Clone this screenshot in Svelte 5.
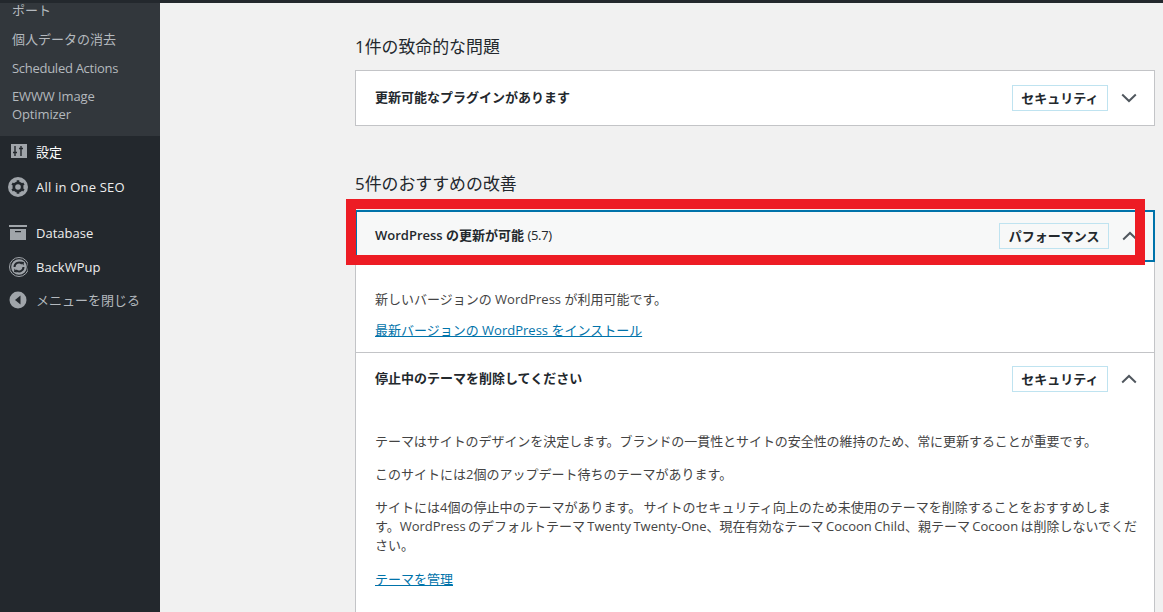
<script>
  const sub = [
    { label: 'ポート', cls: 'first' },
    { label: '個人データの消去', cls: '' },
    { label: 'Scheduled Actions', cls: 'tight' },
    { label: 'EWWW Image Optimizer', cls: 'last' }
  ];
</script>

<div class="page">
  <div class="topbar"></div>
  <div class="body">
    <aside class="side">
      <ul class="submenu">
        {#each sub as s}
          <li class={s.cls}>{s.label}</li>
        {/each}
      </ul>
      <ul class="menu">
        <li class="m settings">
          <svg viewBox="0 0 20 20" width="20" height="20"><path fill="#a0a5aa" d="M3 2h16v14H3z"/><path fill="none" stroke="#23282d" stroke-width="1.400" d="M7 4v10M13 4v10M5 10.500h4M11 6.500h4"/></svg>
          <span class="bright">設定</span>
        </li>
        <li class="m seo">
          <svg viewBox="0 0 20 20" width="20" height="20"><circle cx="10" cy="10" r="10" fill="#a0a5aa"/><circle cx="10" cy="10" r="5.500" fill="#23282d"/><path stroke="#23282d" stroke-width="2.600" d="M10 3.200v13.600M4.100 6.600l11.800 6.800M4.100 13.400l11.800-6.800"/><circle cx="10" cy="10" r="2.800" fill="#a0a5aa"/></svg>
          <span class="wide">All in One SEO</span>
        </li>
        <li class="m db">
          <svg viewBox="0 0 20 20" width="20" height="20"><path fill="#a0a5aa" d="M1 2h18v2H1zM2 6h16v11H2z"/><path fill="#23282d" d="M7 8h6v1.200H7z"/></svg>
          <span>Database</span>
        </li>
        <li class="m bwp">
          <svg viewBox="0 0 20 20" width="20" height="20"><circle cx="11" cy="10" r="9.500" fill="#23282d" stroke="#a0a5aa" stroke-width="1"/><circle cx="11" cy="10" r="7.800" fill="#a0a5aa"/><path fill="none" stroke="#23282d" stroke-width="2" d="M6.500 10a4.500 4.500 0 0 1 7.500-3.300M15.500 10a4.500 4.500 0 0 1-7.500 3.300"/><path fill="#23282d" d="M12.500 4.500l3.500.5-.5 3.500zM9.500 15.500l-3.500-.5.5-3.500z"/></svg>
          <span>BackWPup</span>
        </li>
        <li class="m close">
          <svg viewBox="0 0 20 20" width="20" height="20"><circle cx="10" cy="10" r="8.500" fill="#a0a5aa"/><path fill="#23282d" d="M12.500 5.500v9L7 10z"/></svg>
          <span>メニューを閉じる</span>
        </li>
      </ul>
    </aside>

    <main class="main">
      <div class="col">
        <h2 class="h-critical">1件の致命的な問題</h2>
        <section class="card solo">
          <div class="row">
            <h3>更新可能なプラグインがあります</h3>
            <span class="badge">セキュリティ</span>
            <svg class="chev" viewBox="0 0 16 10" width="16" height="10"><path d="M1.200 1.500 8 8l6.800-6.500" fill="none" stroke="#50575e" stroke-width="2"/></svg>
          </div>
        </section>

        <h2 class="h-rec">5件のおすすめの改善</h2>
        <section class="card">
          <div class="row focus">
            <h3>WordPress の更新が可能 <span class="ver">(5.7)</span></h3>
            <span class="badge">パフォーマンス</span>
            <svg class="chev" viewBox="0 0 16 10" width="16" height="10"><path d="M1.200 8.500 8 2l6.800 6.500" fill="none" stroke="#50575e" stroke-width="2"/></svg>
            <div class="redbox"></div>
          </div>
          <div class="panel one">
            <p>新しいバージョンの WordPress が利用可能です。</p>
            <a href="#update">最新バージョンの WordPress をインストール</a>
          </div>
          <div class="row second">
            <h3>停止中のテーマを削除してください</h3>
            <span class="badge">セキュリティ</span>
            <svg class="chev" viewBox="0 0 16 10" width="16" height="10"><path d="M1.200 8.500 8 2l6.800 6.500" fill="none" stroke="#50575e" stroke-width="2"/></svg>
          </div>
          <div class="panel two">
            <p class="lead">テーマはサイトのデザインを決定します。ブランドの一貫性とサイトの安全性の維持のため、常に更新することが重要です。</p>
            <p>このサイトには2個のアップデート待ちのテーマがあります。</p>
            <p class="long">サイトには4個の停止中のテーマがあります。 サイトのセキュリティ向上のため未使用のテーマを削除することをおすすめしま<br>す。WordPress のデフォルトテーマ Twenty Twenty-One、現在有効なテーマ Cocoon Child、親テーマ Cocoon は削除しないでくだ<br>さい。</p>
            <a href="#themes">テーマを管理</a>
          </div>
        </section>
      </div>
    </main>
  </div>
</div>

<style>
  :global(body) {
    margin: 0;
    overflow: hidden;
  }
  .page {
    height: 612px;
    overflow: hidden;
    display: flex;
    flex-direction: column;
    background: #f1f1f1;
    font-family: "Open Sans", "Noto Sans CJK JP", sans-serif;
    font-size: 13px;
    color: #444;
  }
  .topbar {
    height: 3px;
    flex: none;
    background: #23282d;
  }
  .body {
    flex: 1;
    display: flex;
    min-height: 0;
  }
  .side {
    width: 160px;
    flex: none;
    background: #23282d;
    overflow: hidden;
  }
  ul {
    list-style: none;
    margin: 0;
    padding: 0;
  }
  .submenu {
    background: #32373c;
    color: #b4b9be;
    height: 133px;
    overflow: hidden;
    font-size: 13px;
  }
  .submenu li {
    padding: 0 12px;
    line-height: 18px;
    margin-bottom: 11px;
  }
  .submenu li.first {
    margin-top: -2px;
  }
  .submenu li.tight {
    letter-spacing: -0.28px;
  }
  .submenu li.last {
    margin-top: -1px;
    letter-spacing: -0.12px;
  }
  .menu {
    color: #eeeeee;
  }
  .m {
    display: flex;
    align-items: center;
    padding-left: 8px;
    gap: 8px;
    line-height: 18px;
  }
  .m svg {
    flex: none;
  }
  .settings {
    height: 32px;
  }
  .settings span {
    color: #fff;
  }
  .seo {
    height: 37px;
  }
  .wide {
    letter-spacing: 0.2px;
  }
  .db {
    margin-top: 11px;
    height: 34px;
  }
  .bwp {
    height: 34px;
  }
  .close {
    height: 32px;
    color: #b4b9be;
  }
  .main {
    flex: 1;
    min-width: 0;
    overflow: hidden;
  }
  .col {
    width: 800px;
    margin-left: 195px;
  }
  h2 {
    font-size: 16.900px;
    font-weight: 400;
    line-height: 24px;
    margin: 0;
    color: #23282d;
  }
  .h-critical {
    padding-top: 32px;
    padding-bottom: 11px;
  }
  .h-rec {
    padding-top: 46px;
    padding-bottom: 14px;
  }
  .card {
    background: #fff;
    border: 1px solid #c3c4c7;
    box-sizing: border-box;
  }
  .row {
    position: relative;
    display: flex;
    align-items: center;
    height: 54px;
    padding: 0 17px 0 19px;
    box-sizing: border-box;
  }
  .row.second {
    height: 52px;
  }
  h3 {
    flex: 1;
    margin: -2px 0 0;
    font-size: 13px;
    font-weight: 600;
    line-height: 18px;
    color: #23282d;
  }
  .ver {
    font-weight: 400;
    letter-spacing: -0.3px;
  }
  .badge {
    border: 1px solid #bfe3f0;
    padding: 0 8.500px;
    height: 26px;
    line-height: 24px;
    box-sizing: border-box;
    font-weight: 600;
    color: #23282d;
    margin-right: 13px;
  }
  .chev {
    flex: none;
  }
  .row.focus {
    height: 52px;
    padding-left: 20px;
    background: #f7f8f8;
    outline: 2px solid #0073aa;
    outline-offset: -2px;
    margin: -1px -1px 0 -1px;
  }
  .redbox {
    position: absolute;
    left: -9px;
    top: -11px;
    width: 799px;
    height: 66px;
    box-sizing: border-box;
    border: 10px solid #ed1c24;
    pointer-events: none;
  }
  .panel {
    padding: 0 19px;
    line-height: 18px;
  }
  .panel p {
    margin: 0 0 13px;
  }
  .panel a {
    color: #0073aa;
    text-decoration: underline;
  }
  .panel.one {
    padding-top: 28px;
    padding-bottom: 13px;
    border-bottom: 1px solid #c3c4c7;
  }
  .panel.two {
    padding-top: 27px;
    padding-bottom: 30px;
  }
  .panel.two p {
    margin-bottom: 15px;
  }
  .panel.two .lead {
    letter-spacing: -0.06px;
  }
  .panel.two .long {
    line-height: 19px;
    white-space: nowrap;
    word-spacing: -1px;
  }
</style>
